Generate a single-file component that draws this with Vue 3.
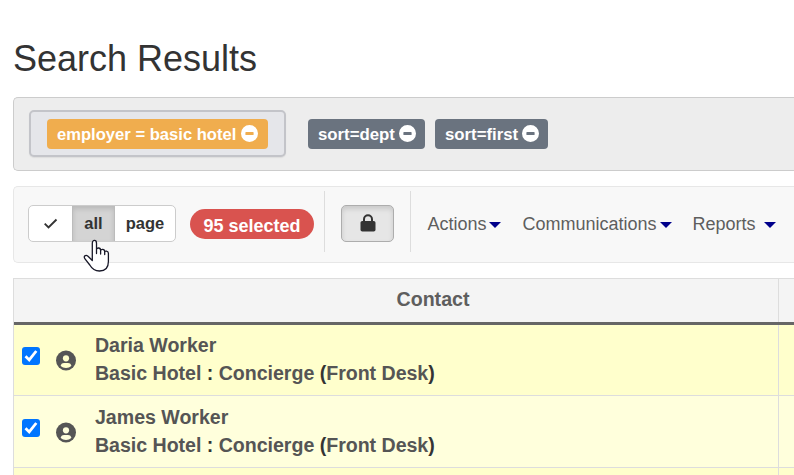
<script setup>
const contacts = [
  { name: 'Daria Worker', org: 'Basic Hotel', title: 'Concierge', dept: 'Front Desk' },
  { name: 'James Worker', org: 'Basic Hotel', title: 'Concierge', dept: 'Front Desk' }
]
const sorts = ['sort=dept', 'sort=first']
const menus = ['Actions', 'Communications', 'Reports']
</script>

<template>
  <main class="page">
    <h1>Search Results</h1>

    <section class="filters">
      <div class="group">
        <span class="tag orange">employer = basic hotel
          <svg class="minus" viewBox="0 0 17 17"><path fill-rule="evenodd" d="M8.5 0a8.5 8.5 0 1 0 0 17 8.5 8.5 0 0 0 0-17zM5 7h7q.6 0 .6.6v1.8q0 .6-.6.6H5q-.6 0-.6-.6V7.600q0-.6.6-.6z" /></svg>
        </span>
      </div>
      <span v-for="s in sorts" :key="s" class="tag slate">{{ s }}
        <svg class="minus" viewBox="0 0 17 17"><path fill-rule="evenodd" d="M8.500 0a8.500 8.500 0 1 0 0 17 8.500 8.500 0 0 0 0-17zM5 7h7q.6 0 .6.6v1.800q0 .6-.6.6H5q-.6 0-.6-.6V7.600q0-.6.6-.6z" /></svg>
      </span>
    </section>

    <section class="toolbar">
      <div class="btns">
        <button class="check"><svg width="14" height="12" viewBox="0 0 14 12"><path d="M.7 5.700 4.500 9.500 12.500 1.500" fill="none" stroke="#333" stroke-width="1.900" /></svg></button>
        <button class="active">all
          <svg class="cursor" width="28" height="34" viewBox="0 0 28 34"><path d="M9.300 19V4.200C9.300 .5 13.500 .5 13.500 4.200V14.500V10.700C13.500 8.300 17.600 8.400 17.600 11.300V15V12C17.600 9.600 21.700 9.900 21.700 12.500V15.500V13.500C21.700 11.300 25.400 11.700 25.400 14.300V22.500C25.400 28.500 22 32 16.500 32C11.500 32 8.800 29.500 6.800 26L2 19.800C-.1 17.200 2.700 15.500 5 17.200L9.300 21.500Z" fill="#fff" stroke="#171727" stroke-width="1.300" stroke-linejoin="round" /></svg>
        </button>
        <button class="last">page</button>
      </div>
      <span class="badge">95 selected</span>
      <div class="lockcell">
        <button class="lock"><svg width="16" height="18" viewBox="0 0 16 18"><path d="M4 8V5.200a4 4 0 0 1 8 0V8" fill="none" stroke="#333" stroke-width="2" /><rect x=".5" y="7" width="15" height="10.500" rx="1.800" fill="#333" /></svg></button>
      </div>
      <nav>
        <a v-for="m in menus" :key="m" :class="m.toLowerCase()">{{ m }}<i class="caret"></i></a>
      </nav>
    </section>

    <section class="table">
      <div class="row head"><div class="cell">Contact</div><div class="rest"></div></div>
      <div v-for="c in contacts" :key="c.name" class="row">
        <div class="cell">
          <span class="box"><svg width="18" height="18" viewBox="0 0 18 18"><path d="M3.500 9.300 7.200 12.900 14.300 4" fill="none" stroke="#fff" stroke-width="2.800" /></svg></span>
          <svg class="user" width="20" height="21" viewBox="0 -.5 20 21"><circle cx="10" cy="10" r="10" fill="#555" /><circle cx="10" cy="7.800" r="3.100" fill="var(--bg)" /><path d="M4.600 15.300C5.200 13.200 6.500 12.500 8 12.500h4c1.500 0 2.800.7 3.400 2.800C12.500 18.200 7.500 18.200 4.600 15.300z" fill="var(--bg)" /></svg>
          <div class="info">
            <div>{{ c.name }}</div>
            <div>{{ c.org }} <b>:</b> {{ c.title }} <b>(</b>{{ c.dept }}<b>)</b></div>
          </div>
        </div>
        <div class="rest"></div>
      </div>
      <div class="row"><div class="cell"></div><div class="rest"></div></div>
    </section>
  </main>
</template>

<style>
body { overflow: hidden; background: #fff; }
</style>

<style scoped>
* { box-sizing: border-box; }
.page { width: 794px; height: 475px; overflow: hidden; padding: 39px 0 0 13px; font-family: "Liberation Sans", Arial, sans-serif; color: #333; }
h1 { margin: 0 0 18px; font-size: 36px; font-weight: 400; line-height: 40px; }
.filters { height: 74px; display: flex; align-items: flex-start; background: #ededed; border: 1px solid #ccc; border-right: 0; border-radius: 5px 0 0 5px; padding: 12px 0 0 15px; }
.group { width: 257px; height: 47px; border: 2px solid #c3c4c9; border-radius: 5px; background: #e5e6ea; padding: 7px 16px; margin-right: 22px; box-shadow: 0 1px 1px #ddd; }
.tag { display: inline-flex; align-items: center; justify-content: space-between; white-space: nowrap; height: 30px; padding: 2px 10px 0; border-radius: 4px; color: #fff; font-weight: 700; font-size: 16.600px; line-height: 28px; }
.orange { background: #f0ad4e; width: 221px; }
.slate { background: #6a737f; margin: 9px 10px 0 0; width: 117px; font-size: 16.800px; padding-right: 9px; }
.slate + .slate { width: 113px; }
.minus { width: 17px; height: 17px; fill: #fff; flex: none; margin-bottom: 3px; }
.toolbar { height: 77px; margin-top: 15px; display: flex; align-items: flex-start; background: #f8f8f8; border: 1px solid #e7e7e7; border-right: 0; border-radius: 5px 0 0 5px; padding: 4px 0 0 14px; }
.btns { display: flex; margin-top: 14px; width: 148px; height: 37px; border: 1px solid #ccc; border-radius: 5px; background: #fff; }
button { font: 700 16.500px/34px "Liberation Sans", Arial, sans-serif; color: #333; background: none; border: 0; padding: 0; }
.check { width: 43px; display: flex; align-items: center; justify-content: center; }
.active { position: relative; width: 43px; background: #d4d4d4; border: solid #bcbcbc; border-width: 0 1px; box-shadow: inset 0 3px 5px rgba(0, 0, 0, .125); }
.active, .last { padding-bottom: 2px; }
.last { width: 60px; }
.cursor { position: absolute; left: 10px; top: 33px; z-index: 2; }
.badge { margin: 18px 0 0 14px; width: 124px; height: 30px; border-radius: 15px; background: #d9534f; color: #fff; text-align: center; font-size: 18px; font-weight: 700; line-height: 34px; }
.lockcell { margin-left: 10px; width: 87px; height: 61px; border: solid #ddd; border-width: 0 1px; padding: 14px 16px; }
.lock { display: flex; align-items: center; justify-content: center; width: 53px; height: 37px; border: 1px solid #adadad; border-radius: 5px; background: #e6e6e6; box-shadow: inset 0 3px 5px rgba(0, 0, 0, .125); }
.lock svg { margin-bottom: 1px; }
nav { display: flex; margin: 22px 0 0 16.500px; font-size: 18px; line-height: 22px; color: #5e5e5e; }
nav a { display: flex; align-items: center; justify-content: space-between; }
.actions { width: 73px; margin-right: 22px; }
.communications { width: 149px; margin-right: 21px; }
.reports { width: 83px; }
.caret { border: 6px solid transparent; border-top-color: #00008b; border-bottom: 0; margin-top: 2px; }
.table { margin-top: 15px; border: solid #ddd; border-width: 1px 0 0 1px; color: #555; font-size: 19.600px; font-weight: 700; line-height: 28px; }
.row { --bg: #ffffcc; display: flex; height: 72px; background: var(--bg); border-bottom: 1px solid #ddd; }
.row:nth-child(2) { height: 71px; }
.row:nth-child(3) { --bg: #ffffdc; }
.row:nth-child(3) .cell { padding-top: 1px; }
.cell { display: flex; align-items: flex-start; width: 765px; border-right: 1px solid #ddd; }
.head { --bg: #f4f4f4; height: 46px; border-bottom: 3px solid #666; }
.head .cell { justify-content: center; padding: 6px 0 0 74px; color: #5e5e5e; }
.box { width: 18px; height: 18px; border-radius: 3px; background: #0075ff; margin: 22px 0 0 8px; display: flex; }
.user { margin: 25px 0 0 16px; }
.info { margin: 6px 0 0 19px; white-space: nowrap; letter-spacing: -.03px; }
.info b { color: #333; }
</style>
